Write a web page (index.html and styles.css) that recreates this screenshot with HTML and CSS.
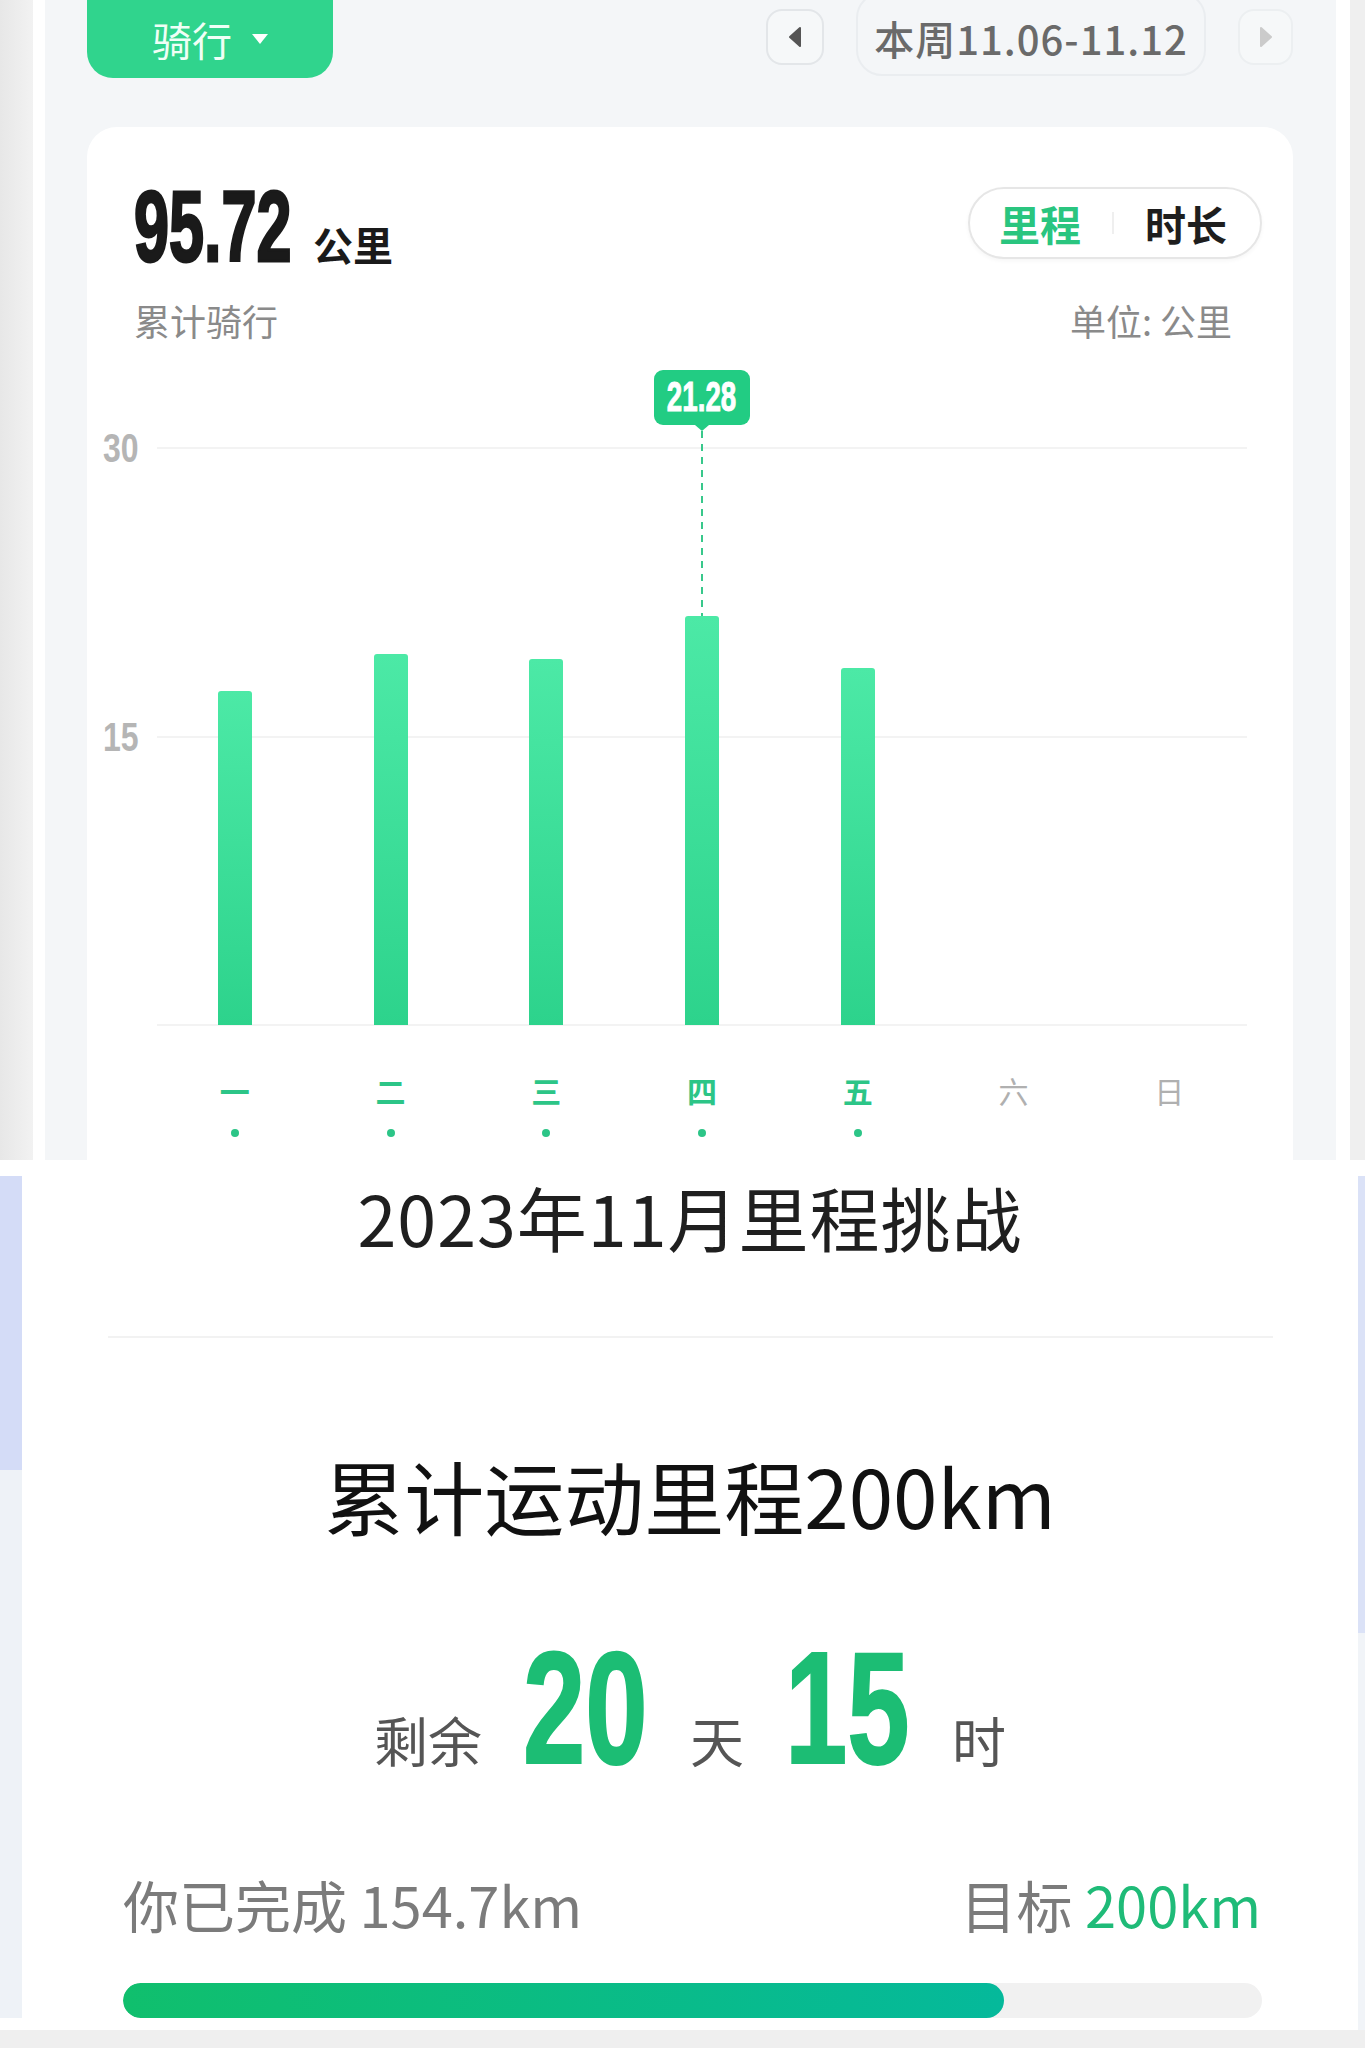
FILE: index.html
```html
<!DOCTYPE html>
<html lang="zh-CN">
<head>
  <meta charset="UTF-8">
  <title>骑行 - 本周数据</title>
  <link rel="stylesheet" href="styles.css">
</head>
<body>
  <div class="shot shot-top">
    <div class="edge-left"></div>
    <div class="panel">
      <div class="toolbar">
        <button class="sport">骑行<span class="caret"></span></button>
        <div class="week-nav">
          <button class="arrow">
            <svg width="16" height="24" viewBox="0 0 16 24"><path d="M13 3 L3 12 L13 21 Z" fill="#555" stroke="#555" stroke-width="2" stroke-linejoin="round"/></svg>
          </button>
          <div class="week">本周11.06-11.12</div>
          <button class="arrow next">
            <svg width="16" height="24" viewBox="0 0 16 24"><path d="M3 3 L13 12 L3 21 Z" fill="#cbcbcb" stroke="#cbcbcb" stroke-width="2" stroke-linejoin="round"/></svg>
          </button>
        </div>
      </div>

      <div class="card">
        <div class="summary">
          <div class="total"><span class="num">95.72</span><span class="unit">公里</span></div>
          <div class="toggle"><span class="on">里程</span><i></i><span>时长</span></div>
        </div>
        <div class="captions">
          <span>累计骑行</span>
          <span>单位: 公里</span>
        </div>

        <div class="chart">
          <div class="axis">
            <div class="tick"><span>30</span><i></i></div>
            <div class="tick"><span>15</span><i></i></div>
            <div class="tick"><span></span><i></i></div>
          </div>
          <div class="bars">
            <div class="col"><div class="bar" style="height:57.93%"></div></div>
            <div class="col"><div class="bar" style="height:64.37%"></div></div>
            <div class="col"><div class="bar" style="height:63.50%"></div></div>
            <div class="col">
              <div class="bar" style="height:70.93%">
                <div class="marker">
                  <div class="tip"><span>21.28</span></div>
                  <div class="tip-arrow"></div>
                  <div class="dash"></div>
                </div>
              </div>
            </div>
            <div class="col"><div class="bar" style="height:61.80%"></div></div>
            <div class="col"></div>
            <div class="col"></div>
          </div>
          <div class="days">
            <div class="day done">一</div>
            <div class="day done">二</div>
            <div class="day done">三</div>
            <div class="day done">四</div>
            <div class="day done">五</div>
            <div class="day">六</div>
            <div class="day">日</div>
          </div>
        </div>
      </div>
    </div>
    <div class="edge-right"></div>
  </div>

  <div class="gap"></div>

  <div class="shot shot-bottom">
    <div class="side-left">
      <div class="lav"></div>
      <div class="pale"></div>
    </div>
    <div class="sheet">
      <h2 class="title">2023年11月里程挑战</h2>
      <div class="divider"></div>
      <div class="goal">累计运动里程200km</div>
      <div class="countdown">
        <span>剩余</span>
        <span class="big">20</span>
        <span>天</span>
        <span class="big">15</span>
        <span>时</span>
      </div>
      <div class="progress-text">
        <span>你已完成 154.7km</span>
        <span>目标 <em class="green">200km</em></span>
      </div>
      <div class="track"><div class="fill" style="width:77.35%"></div></div>
    </div>
    <div class="side-right"></div>
  </div>
  <div class="footer"></div>
</body>
</html>
```

FILE: styles.css
```css
body {
  margin: 0;
  background: #fff;
  font-family: "Noto Sans CJK SC", "Noto Sans", sans-serif;
}

.shot {
  display: flex;
}

/* top screenshot */
.shot-top {
  height: 1160px;
  overflow: hidden;
}

.edge-left {
  width: 33px;
  margin-right: 12px;
  background: linear-gradient(to right, #e7e7e7, #f2f2f2);
}

.edge-right {
  width: 15px;
  margin-left: 14px;
  background: #efefef;
}

.panel {
  width: 1291px;
  box-sizing: border-box;
  padding: 0 43px 0 42px;
  background: #f4f6f8;
  display: flex;
  flex-direction: column;
}

.toolbar {
  display: flex;
  justify-content: space-between;
  align-items: flex-start;
  height: 78px;
}

.sport {
  width: 246px;
  height: 78px;
  padding: 0;
  border: 0;
  border-radius: 0 0 26px 26px;
  background: #30d48d;
  color: #effff6;
  font-family: inherit;
  font-size: 40px;
  display: flex;
  align-items: center;
  justify-content: center;
  gap: 20px;
}

.caret {
  width: 0;
  height: 0;
  border-left: 8px solid transparent;
  border-right: 8px solid transparent;
  border-top: 10px solid #fff;
}

.week-nav {
  display: flex;
  align-items: flex-start;
  gap: 32px;
}

.arrow {
  width: 58px;
  height: 56px;
  margin-top: 9px;
  padding: 0;
  box-sizing: border-box;
  border: 2px solid #e3e6e9;
  border-radius: 16px;
  background: #f6f8f9;
  display: flex;
  align-items: center;
  justify-content: center;
}

.arrow.next {
  width: 55px;
  border-color: #eceff1;
}

.week {
  width: 350px;
  height: 84px;
  margin-top: -8px;
  padding-top: 8px;
  box-sizing: border-box;
  border: 2px solid #eaedf0;
  border-radius: 26px;
  display: flex;
  align-items: center;
  justify-content: center;
  font-size: 40px;
  font-weight: 500;
  letter-spacing: 1px;
  color: #6a6a6a;
}

.card {
  flex: 1;
  margin-top: 49px;
  padding: 49px 31px 0 47px;
  background: #fff;
  border-radius: 30px 30px 0 0;
}

.summary {
  display: flex;
  justify-content: space-between;
  align-items: flex-start;
}

.total {
  display: flex;
  align-items: baseline;
  color: #1a1a1a;
}

.num {
  display: inline-block;
  width: 156px;
  white-space: nowrap;
  font: 700 100px/100px "Liberation Sans", sans-serif;
  -webkit-text-stroke: 3px #1a1a1a;
  transform: scaleX(.63);
  transform-origin: left;
}

.unit {
  margin-left: 23px;
  font-size: 40px;
  font-weight: 700;
}

.toggle {
  margin-top: 11px;
  height: 72px;
  box-sizing: border-box;
  padding: 0 33px 0 29px;
  border: 2px solid #e6e6e6;
  border-radius: 36px;
  box-shadow: 0 2px 4px rgba(0, 0, 0, .04);
  display: flex;
  align-items: center;
  font-size: 41px;
  font-weight: 700;
  color: #1e1e1e;
}

.toggle .on {
  color: #2ac57f;
}

.toggle i {
  width: 2px;
  height: 22px;
  margin: 0 31px;
  background: #efefef;
}

.captions {
  margin-top: 22px;
  padding-right: 30px;
  display: flex;
  justify-content: space-between;
  font-size: 36px;
  line-height: 44px;
  color: #8a8a8a;
}

/* chart */
.chart {
  position: relative;
  margin: 106px 15px 0 -31px;
}

.axis {
  height: 577px;
  display: flex;
  flex-direction: column;
  justify-content: space-between;
}

.tick {
  height: 0;
  display: flex;
  align-items: center;
}

.tick span {
  flex: none;
  width: 54px;
  font: 700 40px/40px "Liberation Sans", sans-serif;
  color: #b5b5b5;
  transform: scaleX(.8);
  transform-origin: left;
}

.tick i {
  flex: 1;
  height: 2px;
  background: #f3f3f3;
}

.bars {
  position: absolute;
  top: 0;
  left: 54px;
  right: 0;
  height: 577px;
  display: grid;
  grid-template-columns: repeat(7, 1fr);
}

.col {
  display: flex;
  justify-content: center;
  align-items: flex-end;
}

.bar {
  position: relative;
  width: 34px;
  border-radius: 3px 3px 0 0;
  background: linear-gradient(#4ce9a6, #2dd38c);
}

.marker {
  position: absolute;
  bottom: 100%;
  left: 50%;
  transform: translateX(-50%);
  display: flex;
  flex-direction: column;
  align-items: center;
}

.tip {
  width: 96px;
  height: 55px;
  border-radius: 9px;
  background: #22cc83;
  display: flex;
  align-items: center;
  justify-content: center;
}

.tip span {
  font: 700 42px/42px "Liberation Sans", sans-serif;
  color: #fff;
  -webkit-text-stroke: 1px #fff;
  transform: scaleX(.66);
}

.tip-arrow {
  width: 0;
  height: 0;
  border-left: 7px solid transparent;
  border-right: 7px solid transparent;
  border-top: 6px solid #22cc83;
}

.dash {
  width: 2px;
  height: 185px;
  background: repeating-linear-gradient(to bottom, #38c88b 0 7px, transparent 7px 13px);
}

.days {
  margin: 47px 0 0 54px;
  display: grid;
  grid-template-columns: repeat(7, 1fr);
}

.day {
  display: flex;
  flex-direction: column;
  align-items: center;
  font-size: 30px;
  line-height: 36px;
  color: #b0b0b0;
}

.day.done {
  color: #2cc587;
  font-weight: 700;
}

.day.done::after {
  content: "";
  width: 8px;
  height: 8px;
  margin-top: 21px;
  border-radius: 50%;
  background: #2cc587;
}

.gap {
  height: 16px;
}

/* bottom screenshot */
.shot-bottom {
  height: 854px;
}

.side-left {
  width: 22px;
}

.side-left .lav {
  height: 294px;
  background: #d4dcf7;
}

.side-left .pale {
  height: 548px;
  background: #eef2f7;
}

.side-right {
  width: 7px;
  background: linear-gradient(#dbe2f7 0 457px, #f1f4f8 457px);
}

.sheet {
  flex: 1;
  text-align: center;
}

.title {
  margin: 0;
  font-size: 70px;
  font-weight: 400;
  line-height: 82px;
  letter-spacing: 1px;
  color: #1f1f1f;
}

.divider {
  height: 2px;
  margin: 78px 85px 0 86px;
  background: #f2f2f2;
}

.goal {
  margin-top: 106px;
  font-size: 80px;
  line-height: 100px;
  color: #111;
}

.countdown {
  margin-top: 84px;
  display: flex;
  justify-content: center;
  align-items: baseline;
  font-size: 54px;
  color: #555;
}

.big {
  display: inline-block;
  width: 126px;
  margin: 0 41px;
  white-space: nowrap;
  font: 700 160px/160px "Liberation Sans", sans-serif;
  color: #1cbd74;
  -webkit-text-stroke: 2px #1cbd74;
  transform: scaleX(.7);
  transform-origin: left;
}

.progress-text {
  margin-top: 81px;
  padding: 0 97px 0 101px;
  display: flex;
  justify-content: space-between;
  font-size: 56px;
  line-height: 70px;
  color: #7b7b7b;
}

.green {
  font-style: normal;
  color: #1fbb78;
}

.track {
  height: 35px;
  margin: 44px 96px 0 101px;
  border-radius: 18px;
  background: #f1f1f1;
  overflow: hidden;
}

.fill {
  height: 100%;
  border-radius: 18px;
  background: linear-gradient(to right, #10bf6d, #05b99b);
}

.footer {
  height: 18px;
  background: #efefef;
}
```
